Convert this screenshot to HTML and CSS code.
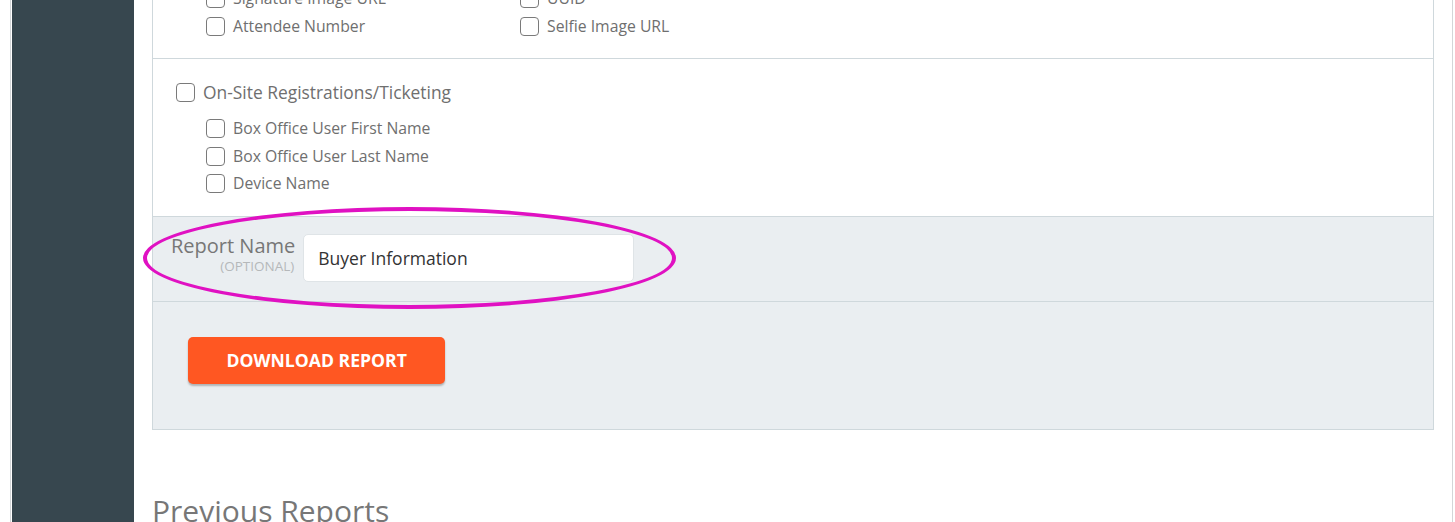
FILE: index.html
```html
<!DOCTYPE html>
<html lang="en">
<head>
  <meta charset="UTF-8" />
  <meta name="viewport" content="width=device-width, initial-scale=1" />
  <title>Reports</title>
  <link rel="stylesheet" href="styles.css">
</head>
<body>

<div class="frame">
  <aside class="sidebar"></aside>

  <main class="content">
    <div class="panel">
      <section class="fields">
        <div class="field-grid">
          <label class="check"><input type="checkbox" /> Signature Image URL</label>
          <label class="check"><input type="checkbox" /> UUID</label>
          <label class="check"><input type="checkbox" /> Attendee Number</label>
          <label class="check"><input type="checkbox" /> Selfie Image URL</label>
        </div>
      </section>

      <section class="group">
        <label class="check group-title"><input type="checkbox" /> On-Site Registrations/Ticketing</label>
        <div class="group-items">
          <label class="check"><input type="checkbox" /> Box Office User First Name</label>
          <label class="check"><input type="checkbox" /> Box Office User Last Name</label>
          <label class="check"><input type="checkbox" /> Device Name</label>
        </div>
      </section>

      <section class="name-row">
        <label class="name-label" for="report-name">
          Report Name
          <small>(Optional)</small>
        </label>
        <input type="text" id="report-name" class="name-input" value="Buyer Information" />
        <!-- highlight drawn over the screenshot -->
        <div class="highlight"></div>
      </section>

      <section class="actions">
        <button class="download">Download Report</button>
      </section>
    </div>

    <h2 class="prev-title">Previous Reports</h2>
  </main>
</div>

</body>
</html>
```

FILE: styles.css
```css
html, body {
  margin: 0;
  height: 100%;
  overflow: hidden;
  background: #fff;
}
body {
  font-family: "Open Sans", Arial, sans-serif;
  color: #6f6f6f;
}
.frame {
  display: flex;
  margin-left: 10px;
  width: 1443px;
  min-height: 100vh;
  box-sizing: border-box;
  border-left: 1px solid #d3d6d8;
  border-right: 1px solid #d3d6d8;
  padding-left: 1px;
}
.sidebar {
  width: 122px;
  flex-shrink: 0;
  background: #37474f;
}
.content {
  flex: 1;
  padding: 0 18px;
}
.panel {
  margin-top: -15px;
  border: 1px solid #cfd8dc;
  border-top: none;
}

/* checkboxes */
.check {
  display: flex;
  align-items: center;
  gap: 8px;
  font-size: 15.75px;
  line-height: 27.5px;
  color: #6f6f6f;
  white-space: nowrap;
}
.check input {
  appearance: none;
  -webkit-appearance: none;
  margin: 0;
  width: 19px;
  height: 19px;
  border: 1.5px solid #7a7a7a;
  border-radius: 4px;
  background: #fff;
  box-sizing: border-box;
  flex-shrink: 0;
}

.fields {
  padding: 0 0 18px 53px;
  border-bottom: 1px solid #cfd8dc;
}
.field-grid {
  display: grid;
  grid-template-columns: 314px 314px;
}

.group {
  padding: 20px 0 18px 23px;
  border-bottom: 1px solid #cfd8dc;
}
.group-title {
  font-size: 17.4px;
  gap: 8px;
}
.group-items {
  margin: 8.5px 0 0 30px;
}

.name-row {
  position: relative;
  display: flex;
  align-items: flex-start;
  gap: 8px;
  padding: 17px 0 19px 18px;
  background: #eaeef1;
  border-bottom: 1px solid #cfd8dc;
}
.name-label {
  display: flex;
  flex-direction: column;
  align-items: flex-end;
  font-size: 20px;
  line-height: 23px;
  color: #777;
}
.name-label small {
  margin-top: 1px;
  margin-right: 1px;
  font-size: 13.5px;
  line-height: 16px;
  text-transform: uppercase;
  color: #b5b8ba;
}
.name-input {
  width: 331px;
  height: 48px;
  box-sizing: border-box;
  padding: 0 14px;
  border: 1px solid #dfe4e7;
  border-radius: 5px;
  background: #fff;
  font-family: inherit;
  font-size: 17.5px;
  color: #333;
  outline: none;
}
.highlight {
  position: absolute;
  left: -10px;
  top: -10px;
  width: 533px;
  height: 102px;
  box-sizing: border-box;
  border: 4px solid #e011c2;
  border-radius: 50%;
  pointer-events: none;
}

.actions {
  padding: 35px 0 45px 35px;
  background: #eaeef1;
}
.download {
  height: 47px;
  padding: 0 38.5px;
  border: none;
  border-radius: 5px;
  background: #ff5722;
  box-shadow: 0 2px 2px rgba(0,0,0,0.25);
  color: #fff;
  font-family: inherit;
  font-size: 17.6px;
  font-weight: 700;
  text-transform: uppercase;
  cursor: pointer;
}

.prev-title {
  margin: 60px 0 0;
  font-size: 30px;
  font-weight: 400;
  color: #777;
}
```
